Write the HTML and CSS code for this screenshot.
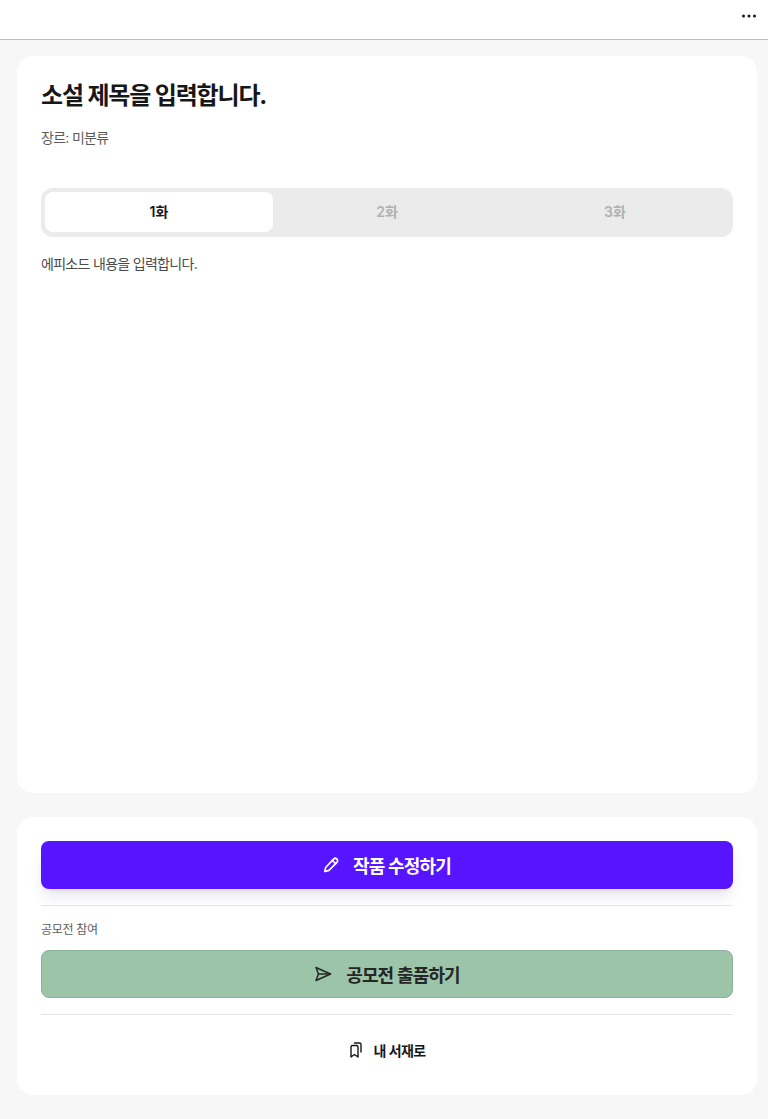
FILE: index.html
```html
<!doctype html>
<html lang="ko">
<head>
<meta charset="UTF-8">
<meta name="viewport" content="width=device-width, initial-scale=1.0">
<title>소설 제목을 입력합니다.</title>
<link rel="stylesheet" href="styles.css">
</head>
<body>
<header class="topbar">
  <button class="more" aria-label="더보기">
    <svg width="16" height="16" viewBox="0 0 16 16"><circle cx="2.500" cy="8" r="1.500"/><circle cx="8" cy="8" r="1.500"/><circle cx="13.500" cy="8" r="1.500"/></svg>
  </button>
</header>
<main class="page">
  <section class="card story">
    <h1 class="title">소설 제목을 입력합니다.</h1>
    <p class="genre">장르: 미분류</p>
    <div class="tabs">
      <div class="tab active">1화</div>
      <div class="tab">2화</div>
      <div class="tab">3화</div>
    </div>
    <p class="episode">에피소드 내용을 입력합니다.</p>
  </section>
  <section class="card actions">
    <button class="btn btn-edit">
      <svg width="16" height="16" viewBox="0 0 16 16" fill="none" stroke="currentColor" stroke-width="1.700" stroke-linecap="round" stroke-linejoin="round"><path d="M10.600 2.100a2.300 2.300 0 0 1 3.300 3.300l-7.700 7.700a2 2 0 0 1-.9.500l-3.100.8a.3.300 0 0 1-.4-.4l.8-3.100a2 2 0 0 1 .5-.9z"/><path d="M9.300 3.400l3.300 3.300"/></svg>
      작품 수정하기
    </button>
    <hr class="line">
    <p class="label">공모전 참여</p>
    <button class="btn btn-submit">
      <svg width="18" height="18" viewBox="0 0 18 18" fill="none" stroke="currentColor" stroke-width="1.500" stroke-linecap="round" stroke-linejoin="round"><path d="M2 2.500L16.500 9 2 15.500 4.500 9z"/><path d="M4.500 9h12"/></svg>
      공모전 출품하기
    </button>
    <hr class="line line-low">
    <a class="shelf" href="#">
      <svg width="16" height="16" viewBox="0 0 16 16" fill="none" stroke="currentColor" stroke-width="1.400" stroke-linecap="round" stroke-linejoin="round"><path d="M10 5a1.500 1.500 0 0 0-1.500-1.500h-4A1.500 1.500 0 0 0 3 5v10l3.500-2.500L10 15z"/><path d="M6.500 1h5A1.500 1.500 0 0 1 13 2.500V10"/></svg>
      내 서재로
    </a>
  </section>
</main>
</body>
</html>
```

FILE: styles.css
```css
* {
    box-sizing: border-box;
}
body {
    margin: 0;
    background: #f7f7f7;
    color: #171717;
    font-family: Inter, "Noto Sans CJK KR", sans-serif;
}
.topbar {
    height: 40px;
    background: #fff;
    border-bottom: 1px solid #bdbdbd;
    display: flex;
    justify-content: flex-end;
    align-items: flex-start;
}
.more {
    border: 0;
    background: none;
    padding: 8px 11px 0 0;
    display: flex;
}
.more svg {
    fill: #171717;
}
.page {
    padding: 16px 11px 24px 17px;
    display: flex;
    flex-direction: column;
    gap: 24px;
}
.card {
    background: #fff;
    border-radius: 16px;
    padding: 24px;
}
.story {
    height: 737px;
}
.title {
    margin: 0;
    font-size: 24px;
    line-height: 32px;
    font-weight: 700;
    letter-spacing: -1.15px;
}
.genre {
    margin: 16px 0 0;
    font-size: 14px;
    line-height: 20px;
    letter-spacing: -0.7px;
    color: #5c5c5c;
}
.tabs {
    margin-top: 40px;
    height: 49px;
    padding: 4px;
    background: #ebebeb;
    border-radius: 12px;
    display: flex;
}
.tab {
    flex: 1;
    height: 40px;
    border-radius: 8px;
    font-size: 14px;
    font-weight: 600;
    line-height: 40px;
    text-align: center;
    color: #b0b0b0;
}
.tab.active {
    background: #fff;
    color: #171717;
}
.episode {
    margin: 17px 0 0;
    font-size: 14px;
    line-height: 20px;
    letter-spacing: -0.7px;
    color: #4a4a4a;
}
.actions {
    height: 278px;
}
.btn {
    width: 100%;
    height: 48px;
    border-radius: 8px;
    font-family: inherit;
    font-size: 18px;
    font-weight: 600;
    letter-spacing: -0.85px;
    display: flex;
    align-items: center;
    justify-content: center;
    gap: 14px;
}
.btn-edit {
    border: 0;
    background: #5714ff;
    color: #fff;
    box-shadow: 0 10px 15px -3px rgba(60, 50, 120, 0.12), 0 4px 6px -4px rgba(60, 50, 120, 0.12);
}
.btn-submit {
    border: 1px solid #8ab39b;
    background: #9bc4a8;
    color: #262626;
}
.line {
    margin: 16px 0 0;
    border: 0;
    border-top: 1px solid #e5e5e5;
}
.label {
    margin: 16px 0 0;
    font-size: 12px;
    line-height: 16px;
    letter-spacing: -0.33px;
    color: #5c5c5c;
}
.actions .label + .btn {
    margin-top: 12px;
}
.shelf {
    margin-top: 23px;
    height: 24px;
    display: flex;
    align-items: center;
    justify-content: center;
    gap: 9px;
    font-size: 14px;
    font-weight: 600;
    letter-spacing: -0.6px;
    color: #171717;
    text-decoration: none;
}
```
